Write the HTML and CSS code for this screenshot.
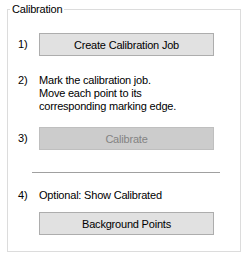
FILE: index.html
```html
<!DOCTYPE html>
<html lang="en">
<head>
  <meta charset="UTF-8" />
  <title>Calibration</title>
  <link rel="stylesheet" href="styles.css">
</head>
<body>
  <div class="group">
    <span class="legend">Calibration</span>

    <div class="step step-1">
      <span class="num">1)</span>
      <button class="btn">Create Calibration Job</button>
    </div>

    <div class="step step-2">
      <span class="num">2)</span>
      <p class="text">Mark the calibration job.<br>Move each point to its<br>corresponding marking edge.</p>
    </div>

    <div class="step step-3">
      <span class="num">3)</span>
      <button class="btn" disabled>Calibrate</button>
    </div>

    <div class="separator"></div>

    <div class="step step-4">
      <span class="num">4)</span>
      <p class="text">Optional: Show Calibrated</p>
    </div>

    <div class="step step-5">
      <span class="num"></span>
      <button class="btn">Background Points</button>
    </div>
  </div>
</body>
</html>
```

FILE: styles.css
```css
body {
  margin: 0;
  background: #ffffff;
  font-family: "Liberation Sans", Arial, sans-serif;
  font-size: 11px;
  line-height: 13px;
  letter-spacing: -0.2px;
  color: #000000;
}
.group {
  position: relative;
  box-sizing: border-box;
  width: 234px;
  height: 243px;
  margin: 9px 0 0 7px;
  padding: 23px 0 0 10px;
  border: 1px solid #dcdcdc;
}
.legend {
  position: absolute;
  top: -7px;
  left: 2px;
  padding: 0 2px;
  background: #ffffff;
}
.step {
  display: grid;
  grid-template-columns: 21px 175px;
  align-items: center;
}
.text {
  margin: 0;
}
.step-2 {
  margin-top: 18px;
  align-items: start;
}
.step-3 {
  margin-top: 14px;
}
.step-4 {
  margin-top: 16px;
}
.step-5 {
  margin-top: 10px;
}
.btn {
  box-sizing: border-box;
  width: 175px;
  height: 23px;
  margin: 0;
  padding: 0;
  font-family: inherit;
  font-size: 11px;
  letter-spacing: -0.2px;
  color: #000000;
  background: #e1e1e1;
  border: 1px solid #adadad;
  border-radius: 0;
}
.btn:disabled {
  background: #cccccc;
  border-color: #bfbfbf;
  color: #838383;
}
.separator {
  width: 188px;
  height: 1px;
  margin: 22px 0 0 14px;
  background: #a0a0a0;
}
```
